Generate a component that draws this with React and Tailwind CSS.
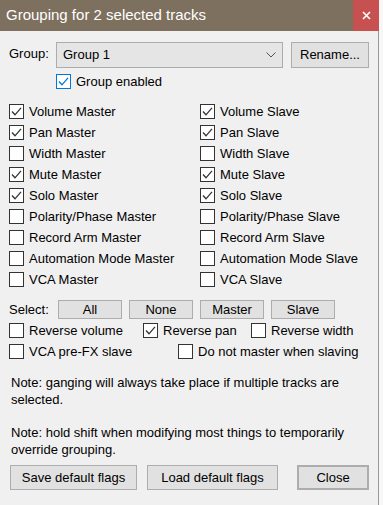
import React from "react";

const font = { fontFamily: '"Liberation Sans", Arial, sans-serif' };

function Check({ on, blue }) {
    const border = blue ? "border-[#0078d7]" : "border-[#333333]";
    const stroke = blue ? "#0078d7" : "#333333";
    return (
        <span
            className={`w-[15px] h-[15px] shrink-0 bg-white border ${border} flex items-center justify-center`}
        >
            {on && (
                <svg width="13" height="13" viewBox="0 0 13 13">
                    <path
                        d="M2 6.5 L5 9.8 L11 2.8"
                        fill="none"
                        stroke={stroke}
                        strokeWidth="1.3"
                    />
                </svg>
            )}
        </span>
    );
}

function Box({ label, on, blue, className = "" }) {
    return (
        <div className={`flex items-center gap-[5px] ${className}`}>
            <Check on={on} blue={blue} />
            <span className="whitespace-nowrap">{label}</span>
        </div>
    );
}

const rows = [
    ["Volume", true],
    ["Pan", true],
    ["Width", false],
    ["Mute", true],
    ["Solo", true],
    ["Polarity/Phase", false],
    ["Record Arm", false],
    ["Automation Mode", false],
    ["VCA", false],
];

function Btn({ children, className = "" }) {
    return (
        <div
            className={`bg-[#e1e1e1] border border-[#adadad] flex items-center justify-center ${className}`}
        >
            {children}
        </div>
    );
}

export default function App() {
    return (
        <div className="w-[383px] h-[505px] bg-[#f7f7f7] flex overflow-hidden" style={font}>
            <div className="w-[379px] h-full flex flex-col bg-[#f0f0f0] text-[13px] text-black">
                {/* Title bar */}
                <div className="h-[31px] shrink-0 bg-[#7d705e] flex items-center">
                    <span className="pl-[6px] text-white text-[15px] flex-1">
                        Grouping for 2 selected tracks
                    </span>
                    <div className="w-[26px] h-full bg-[#c75050] flex items-center justify-center">
                        <svg width="9" height="9" viewBox="0 0 9 9">
                            <path d="M1 1 L8 8 M8 1 L1 8" stroke="#fff" strokeWidth="1.6" />
                        </svg>
                    </div>
                </div>

                <div className="flex-1 flex flex-col border-r border-[#9a9a9a]">
                    {/* Group row */}
                    <div className="mt-[11px] h-[26px] flex items-center pl-[9px]">
                        <span className="w-[47px] -mt-[3px]">Group:</span>
                        <div className="w-[227px] h-full bg-[#e5e5e5] border border-[#acacac] flex items-center pl-[6px] pr-[6px]">
                            <span className="flex-1">Group 1</span>
                            <svg width="10" height="6" viewBox="0 0 10 6">
                                <path d="M0.5 0.5 L5 5 L9.5 0.5" fill="none" stroke="#555" strokeWidth="1" />
                            </svg>
                        </div>
                        <Btn className="ml-[8px] w-[78px] h-full">Rename...</Btn>
                    </div>

                    <Box label="Group enabled" on blue className="mt-[6px] ml-[56px] h-[15px]" />

                    {/* Master / slave grid */}
                    <div className="mt-[12px] pl-[9px] flex flex-col">
                        {rows.map(([name, on]) => (
                            <div key={name} className="h-[21px] flex items-center">
                                <Box label={`${name} Master`} on={on} className="w-[191px]" />
                                <Box label={`${name} Slave`} on={on} />
                            </div>
                        ))}
                    </div>

                    {/* Select row */}
                    <div className="mt-[10px] h-[19px] flex items-center pl-[9px]">
                        <span className="w-[49px]">Select:</span>
                        <div className="flex gap-[7px]">
                            <Btn className="w-[64px] h-[19px]">All</Btn>
                            <Btn className="w-[64px] h-[19px]">None</Btn>
                            <Btn className="w-[64px] h-[19px]">Master</Btn>
                            <Btn className="w-[64px] h-[19px]">Slave</Btn>
                        </div>
                    </div>

                    <div className="mt-[1px] h-[21px] flex items-center pl-[9px]">
                        <Box label="Reverse volume" className="w-[134px]" />
                        <Box label="Reverse pan" on className="w-[108px]" />
                        <Box label="Reverse width" />
                    </div>
                    <div className="h-[21px] flex items-center pl-[9px]">
                        <Box label="VCA pre-FX slave" className="w-[169px]" />
                        <Box label="Do not master when slaving" />
                    </div>

                    {/* Notes */}
                    <div className="mt-[12px] pl-[11px] pr-[6px] leading-[17px]">
                        <p>Note: ganging will always take place if multiple tracks are selected.</p>
                        <p className="mt-[16px]">
                            Note: hold shift when modifying most things to temporarily override grouping.
                        </p>
                    </div>

                    {/* Bottom buttons */}
                    <div className="mt-[7px] h-[25px] flex pl-[10px]">
                        <Btn className="w-[127px] h-full">Save default flags</Btn>
                        <Btn className="ml-[10px] w-[131px] h-full">Load default flags</Btn>
                        <Btn className="ml-[19px] w-[72px] h-full border-2 border-[#0078d7]">Close</Btn>
                    </div>
                </div>
            </div>
        </div>
    );
}
